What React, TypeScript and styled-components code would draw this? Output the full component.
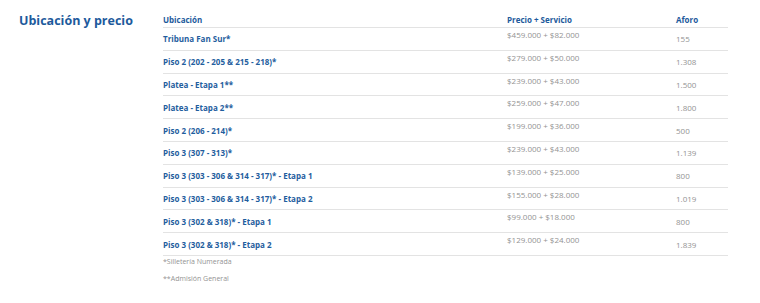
import React from "react";
import styled, { createGlobalStyle } from "styled-components";

const Global = createGlobalStyle`
  html, body { margin: 0; padding: 0; background: #fff; }
  body { font-family: "Open Sans", "Liberation Sans", sans-serif; }
`;

const Section = styled.section`
  display: flex;
  align-items: flex-start;
  padding: 11px 32px 0 19px;
`;

const Title = styled.h2`
  margin: 0;
  width: 144px;
  flex: none;
  font-size: 12.5px;
  line-height: 19px;
  font-weight: 700;
  color: #1d5a9c;
`;

const Body = styled.div`
  flex: 1;
  display: flex;
  flex-direction: column;
`;

const Table = styled.table`
  width: 565px;
  border-collapse: collapse;
`;

const HeadCell = styled.th<{ $w?: number }>`
  text-align: left;
  padding: 4px 0 2px;
  font-size: 8px;
  line-height: 10px;
  font-weight: 700;
  color: #1d5a9c;
  width: ${(p) => (p.$w ? `${p.$w}px` : "auto")};
  border-bottom: 1px solid #e3e3e3;
`;

const Row = styled.tr`
  border-bottom: 1px solid #e3e3e3;
  height: 22.8px;
`;

const NameCell = styled.td`
  padding: 0;
  font-size: 8px;
  font-weight: 700;
  color: #1f5e9e;
  vertical-align: middle;
`;

const PriceCell = styled.td`
  padding: 2px 0 0;
  font-size: 8px;
  line-height: 10px;
  color: #939393;
  vertical-align: top;
`;

const AforoCell = styled.td`
  padding: 0;
  font-size: 8px;
  color: #939393;
  vertical-align: middle;
`;

const Notes = styled.div`
  display: flex;
  flex-direction: column;
  gap: 6px;
`;

const Note = styled.p`
  margin: 0;
  font-size: 7px;
  line-height: 11px;
  color: #939393;
`;

const rows = [
  ["Tribuna Fan Sur*", "$459.000 + $82.000", "155"],
  ["Piso 2 (202 - 205 & 215 - 218)*", "$279.000 + $50.000", "1.308"],
  ["Platea - Etapa 1**", "$239.000 + $43.000", "1.500"],
  ["Platea - Etapa 2**", "$259.000 + $47.000", "1.800"],
  ["Piso 2 (206 - 214)*", "$199.000 + $36.000", "500"],
  ["Piso 3 (307 - 313)*", "$239.000 + $43.000", "1.139"],
  ["Piso 3 (303 - 306 & 314 - 317)* - Etapa 1", "$139.000 + $25.000", "800"],
  ["Piso 3 (303 - 306 & 314 - 317)* - Etapa 2", "$155.000 + $28.000", "1.019"],
  ["Piso 3 (302 & 318)* - Etapa 1", "$99.000 + $18.000", "800"],
  ["Piso 3 (302 & 318)* - Etapa 2", "$129.000 + $24.000", "1.839"],
];

export default function App() {
  return (
    <>
      <Global />
      <Section>
        <Title>Ubicación y precio</Title>
        <Body>
          <Table>
            <thead>
              <tr>
                <HeadCell $w={344}>Ubicación</HeadCell>
                <HeadCell $w={169}>Precio + Servicio</HeadCell>
                <HeadCell>Aforo</HeadCell>
              </tr>
            </thead>
            <tbody>
              {rows.map(([n, p, a]) => (
                <Row key={n + p}>
                  <NameCell>{n}</NameCell>
                  <PriceCell>{p}</PriceCell>
                  <AforoCell>{a}</AforoCell>
                </Row>
              ))}
            </tbody>
          </Table>
          <Notes>
            <Note>*Silletería Numerada</Note>
            <Note>**Admisión General</Note>
          </Notes>
        </Body>
      </Section>
    </>
  );
}
